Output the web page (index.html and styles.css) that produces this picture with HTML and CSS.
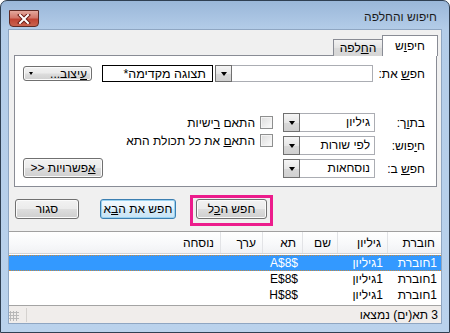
FILE: index.html
```html
<!DOCTYPE html>
<html lang="he" dir="rtl">
<head>
<meta charset="utf-8">
<title>חיפוש והחלפה</title>
<link rel="stylesheet" href="styles.css">
</head>
<body>
<div class="window">
  <div class="titlebar">
    <span class="title">חיפוש והחלפה</span>
    <span class="close">
      <svg width="14" height="10" viewBox="0 0 14 10"><path d="M3 1 L11 9 M11 1 L3 9" stroke="#6b1d16" stroke-width="4" stroke-linecap="square"/><path d="M3 1 L11 9 M11 1 L3 9" stroke="#fff" stroke-width="2" stroke-linecap="square"/></svg>
    </span>
  </div>
  <div class="client">
    <div class="tabs">
      <div class="tab active">חיפ<u>ו</u>ש</div>
      <div class="tab">ה<u>ח</u>לפה</div>
    </div>
    <div class="panel">
      <div class="find-row">
        <span class="lbl find-lbl">חפ<u>ש</u> את:</span>
        <div class="combo find-combo"><div class="field"></div><div class="arrow"><span class="tri"></span></div></div>
        <div class="preview">תצוגה מקדימה*</div>
        <div class="btn fmt-btn"><span><u>ע</u>יצוב...</span><span class="tri small"></span></div>
      </div>
      <div class="opts">
        <div class="opt-grid">
          <span class="lbl">בת<u>ו</u>ך:</span>
          <div class="combo"><div class="field">גיליון</div><div class="arrow"><span class="tri"></span></div></div>
          <span class="lbl">ח<u>י</u>פוש:</span>
          <div class="combo"><div class="field">לפי שורות</div><div class="arrow"><span class="tri"></span></div></div>
          <span class="lbl">חפ<u>ש</u> ב:</span>
          <div class="combo"><div class="field">נוסחאות</div><div class="arrow"><span class="tri"></span></div></div>
        </div>
        <div class="checks">
          <div class="check"><span class="box"></span><span>התאם <u>ר</u>ישיות</span></div>
          <div class="check"><span class="box"></span><span>התא<u>ם</u> את כל תכולת התא</span></div>
        </div>
        <div class="btn opt-btn"><u>א</u>פשרויות &lt;&lt;</div>
      </div>
    </div>
    <div class="actions">
      <div class="mark"><div class="btn all-btn">חפש ה<u>כ</u>ל</div></div>
      <div class="btn default next-btn">חפש את ה<u>ב</u>א</div>
      <div class="btn close-btn">סגור</div>
    </div>
    <div class="results">
      <div class="row head">
        <span class="c c1">חוברת</span><span class="c c2">גיליון</span><span class="c c3">שם</span><span class="c c4">תא</span><span class="c c5">ערך</span><span class="c c6">נוסחה</span>
      </div>
      <div class="row sel">
        <span class="c c1">1חוברת</span><span class="c c2">1גיליון</span><span class="c c3"></span><span class="c c4">$A$8</span><span class="c c5"></span><span class="c c6"></span>
      </div>
      <div class="row">
        <span class="c c1">1חוברת</span><span class="c c2">1גיליון</span><span class="c c3"></span><span class="c c4">$E$8</span><span class="c c5"></span><span class="c c6"></span>
      </div>
      <div class="row">
        <span class="c c1">1חוברת</span><span class="c c2">1גיליון</span><span class="c c3"></span><span class="c c4">$H$8</span><span class="c c5"></span><span class="c c6"></span>
      </div>
    </div>
    <div class="status">
      <span class="status-text">3 תא(ים) נמצאו</span>
      <span class="sep"></span>
      <span class="grip"></span>
    </div>
  </div>
</div>
</body>
</html>
```
FILE: styles.css
```css
* { box-sizing: border-box; }
html, body { margin: 0; padding: 0; }
body {
  width: 450px; height: 333px; overflow: hidden;
  font-family: "Liberation Sans", "DejaVu Sans", sans-serif;
  font-size: 12px; color: #000; background: #fff;
}
u { text-decoration: underline; text-underline-offset: 1px; }

.window {
  width: 450px; height: 333px;
  border: 1px solid #2f3f52;
  border-radius: 7px 7px 0 0;
  background: linear-gradient(#9ab7d9 0, #b3cce8 28px, #bad2ec 100%);
  display: flex; flex-direction: column;
  padding: 0 7px 8px 7px;
}
.titlebar {
  height: 28px; flex: none;
  display: flex; justify-content: space-between; align-items: flex-start;
  padding: 0 5px 0 1px;
}
.title { margin-top: 9px; font-size: 12px; color: #1b1b1b; }
.close {
  margin-top: 9px; width: 30px; height: 17px;
  border: 1px solid #5f2a24; border-radius: 0 0 4px 4px;
  background: linear-gradient(#e4a89d 0, #d2776a 45%, #c04433 55%, #c9634f 100%);
  display: flex; align-items: center; justify-content: center;
}
.close svg { display: block; }

.client {
  flex: 1; background: #f0f0f0;
  border: 1px solid #8fa6c2;
  display: flex; flex-direction: column;
  padding-top: 5px;
}
.tabs {
  display: flex; align-items: flex-end;
  height: 21px; margin: 0 3px -1px 0;
  position: relative; z-index: 1;
}
.tab {
  height: 17px; width: 50px;
  border: 1px solid #898c95; border-bottom: none;
  background: linear-gradient(#f3f3f3, #e3e3e3 50%, #dadada 51%, #d6d6d6);
  display: flex; align-items: center; justify-content: center;
  margin-right: -1px;
}
.tab.active {
  height: 21px; width: 56px; margin-right: 0;
  background: #fff; position: relative; z-index: 2;
  padding-bottom: 1px;
}
.panel {
  margin: 0 4px 0 5px; height: 132px; flex: none;
  background: #fff; border: 1px solid #898c95;
  padding: 9px 11px 4px 8px;
  display: flex; flex-direction: column;
}
.find-row { display: flex; align-items: center; height: 17px; }
.lbl { white-space: nowrap; }
.find-lbl { width: 52px; }

.combo {
  display: flex; height: 18px;
  background: #fff;
}
.combo .field {
  flex: 1; border: 1px solid #abadb3; border-left: none;
  padding: 0 4px; line-height: 16px; white-space: nowrap;
}
.combo .arrow {
  width: 17px; flex: none;
  border: 1px solid #707070;
  background: linear-gradient(#f5f5f5, #e6e6e6 50%, #d8d8d8 51%, #d0d0d0);
  display: flex; align-items: center; justify-content: center;
}
.tri {
  width: 0; height: 0;
  border-left: 3.5px solid transparent; border-right: 3.5px solid transparent;
  border-top: 4px solid #000;
}
.tri.small { border-left-width: 2.5px; border-right-width: 2.5px; border-top-width: 3px; }
.find-combo { width: 158px; height: 17px; }
.preview {
  width: 111px; height: 17px; margin-right: 2px;
  border: 1px solid #000; background: #fff;
  display: flex; align-items: center; padding: 0 6px; font-size: 12.5px;
}

.btn {
  border: 1px solid #707070; border-radius: 3px;
  background: linear-gradient(#f2f2f2 0, #ebebeb 48%, #dddddd 52%, #cfcfcf 100%);
  box-shadow: inset 0 0 0 1px #fbfbfb;
  display: flex; align-items: center; justify-content: center;
  white-space: nowrap;
}
.fmt-btn {
  width: 69px; height: 15px; margin-right: auto;
  justify-content: space-between; padding: 0 4px 0 5px;
}
.opts { display: flex; margin-top: 31px; }
.opt-grid {
  display: grid; grid-template-columns: 50px 92px;
  grid-auto-rows: 19px; row-gap: 4px; align-items: center;
}
.opt-grid .combo { height: 19px; }
.checks { display: flex; flex-direction: column; margin-right: 10px; padding-top: 3px; gap: 5px; }
.check { display: flex; align-items: center; gap: 5px; height: 13px; }
.box {
  width: 13px; height: 13px; flex: none;
  border: 1px solid #8e8f8f;
  background: linear-gradient(135deg, #dcdcdc, #fbfbfb);
  box-shadow: inset 0 0 0 1px #f4f4f4;
}
.opt-btn {
  width: 80px; height: 20px; align-self: flex-end;
  margin-right: auto; margin-bottom: 0;
}

.actions {
  display: flex; align-items: flex-start;
  margin-top: 8px; padding-left: 6px;
}
.mark {
  border: 3px solid #ec1c8c; padding: 1px 3px 4px 3px;
  margin-right: 168px;
}
.all-btn { width: 71px; height: 20px; }
.next-btn { width: 80px; height: 20px; margin-right: 14px; margin-top: 4px; }
.default {
  border-color: #3c7fb1;
  background: linear-gradient(#f3f9fd 0, #e6f3fb 48%, #d5ebf8 52%, #c9e4f5 100%);
  box-shadow: inset 0 0 0 1px #9ad2f0;
}
.close-btn { width: 67px; height: 20px; margin-right: 21px; margin-top: 4px; }

.results {
  margin-top: 5px; height: 74px; flex: none;
  background: #fff; border-top: 1px solid #a0a0a0;
  display: flex; flex-direction: column;
}
.row { display: flex; height: 16px; align-items: center; }
.row.head {
  height: 22px; margin-bottom: 1px;
  background: linear-gradient(#ffffff, #f7f8fa 60%, #f1f2f4);
  border-bottom: 1px solid #d5d5d5;
}
.c { flex: none; padding-right: 4px; white-space: nowrap; height: 100%; display: flex; align-items: center; }
.head .c { padding-right: 6px; border-left: 1px solid #e2e3e6; }
.c1 { width: 54px; }
.c2 { width: 50px; }
.c3 { width: 35px; }
.c4 { width: 40px; }
.c5 { width: 42px; }
.c6 { flex: 1; }
.head .c6 { border-left: none; }
.row.sel {
  background: #3399ff; color: #fff;
  border-top: 1px dotted #c88a40; border-bottom: 1px dotted #c88a40;
}

.status {
  flex: 1; display: flex; align-items: center;
  background: #f0edeb; border-top: 1px solid #a4a4a4;
  padding-right: 3px;
}
.status-text { flex: 1; }
.sep { width: 1px; height: 14px; background: #d5d2cf; margin-left: 5px; }
.grip {
  width: 10px; height: 10px; align-self: flex-end; margin: 0 2px 2px 0;
  background: radial-gradient(circle, #b8b8b8 1px, transparent 1.2px) 0 0 / 3px 3px;
}
```
